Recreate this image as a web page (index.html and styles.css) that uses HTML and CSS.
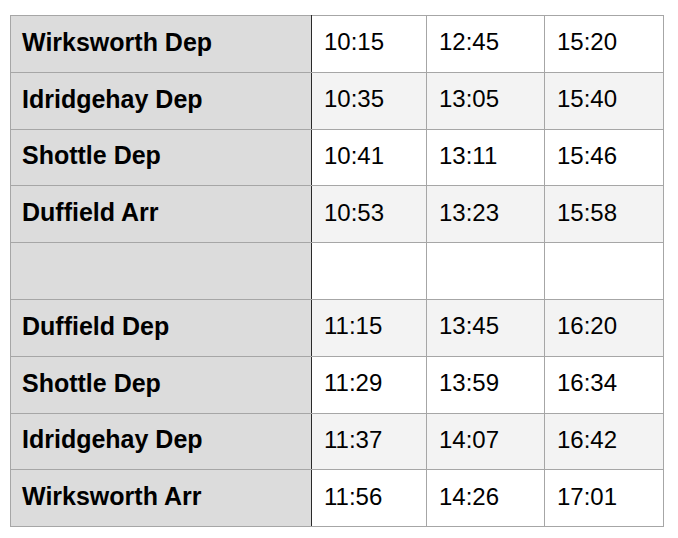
FILE: index.html
```html
<!DOCTYPE html>
<html>
<head>
<meta charset="utf-8">
<link rel="stylesheet" href="styles.css">
</head>
<body>
<table class="timetable">
  <colgroup>
    <col class="c-station">
    <col class="c-time">
    <col class="c-time2">
    <col class="c-time3">
  </colgroup>
  <tbody>
    <tr><th>Wirksworth Dep</th><td>10:15</td><td>12:45</td><td>15:20</td></tr>
    <tr class="alt"><th>Idridgehay Dep</th><td>10:35</td><td>13:05</td><td>15:40</td></tr>
    <tr><th>Shottle Dep</th><td>10:41</td><td>13:11</td><td>15:46</td></tr>
    <tr class="alt"><th>Duffield Arr</th><td>10:53</td><td>13:23</td><td>15:58</td></tr>
    <tr><th></th><td></td><td></td><td></td></tr>
    <tr class="alt"><th>Duffield Dep</th><td>11:15</td><td>13:45</td><td>16:20</td></tr>
    <tr><th>Shottle Dep</th><td>11:29</td><td>13:59</td><td>16:34</td></tr>
    <tr class="alt"><th>Idridgehay Dep</th><td>11:37</td><td>14:07</td><td>16:42</td></tr>
    <tr><th>Wirksworth Arr</th><td>11:56</td><td>14:26</td><td>17:01</td></tr>
  </tbody>
</table>
</body>
</html>
```
FILE: styles.css
```css
html, body {
  margin: 0;
  padding: 0;
  background: #ffffff;
}
body {
  padding: 15px 0 0 10px;
  font-family: "Liberation Sans", Arial, sans-serif;
  color: #000;
}
.timetable {
  border-collapse: collapse;
  table-layout: fixed;
  width: 653px;
}
.timetable tr {
  height: 56.8px;
}
.c-station { width: 301px; }
.c-time { width: 115px; }
.c-time2 { width: 118px; }
.c-time3 { width: 119px; }
.timetable th,
.timetable td {
  border: 1px solid #a6a6a6;
  padding: 0 0 3px 12px;
  text-align: left;
  vertical-align: middle;
  white-space: nowrap;
}
.timetable th {
  background: #dcdcdc;
  font-weight: bold;
  font-size: 25px;
  padding-left: 11px;
  border-right: 1px solid #2a2a2a;
}
.timetable td {
  background: #ffffff;
  font-size: 24px;
}
.timetable tr.alt td {
  background: #f3f3f3;
}
```
